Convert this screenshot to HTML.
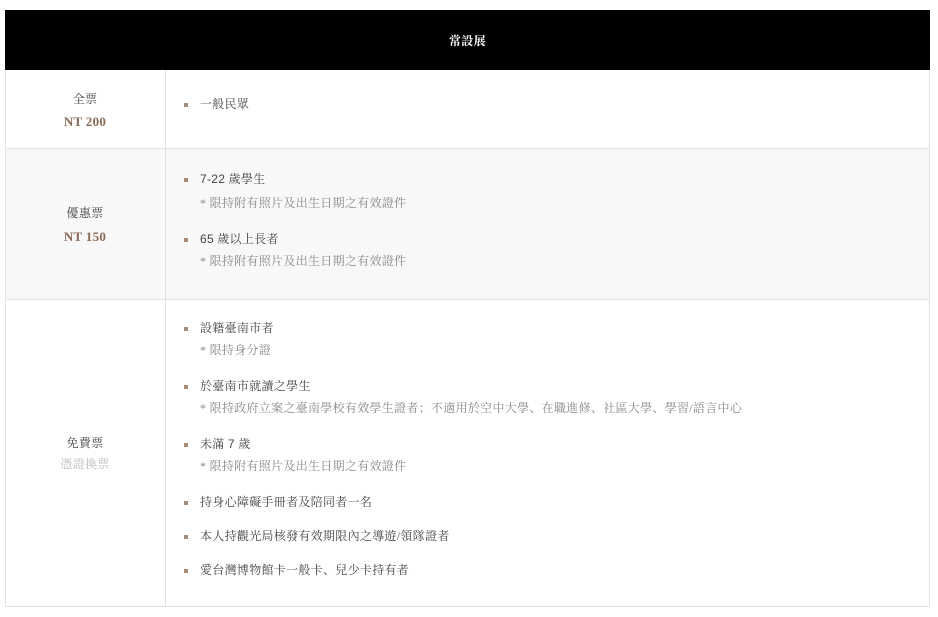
<!DOCTYPE html>
<html><head><meta charset="utf-8"><style>
*{margin:0;padding:0;box-sizing:border-box}
body{width:938px;height:617px;background:#fff;position:relative;font-family:"Liberation Serif","Noto Serif CJK SC",serif;font-size:12px;color:#444;overflow:hidden}
.a{position:absolute;white-space:nowrap;line-height:16px;letter-spacing:0.3px}
.hd{position:absolute;left:5px;top:10px;width:925px;height:60px;background:#000}
.r{position:absolute;left:5px;width:925px;border:1px solid #e3e3e3;border-top:none}
.v{position:absolute;left:165px;width:1px;background:#e3e3e3}
.c{left:5px;width:160px;text-align:center}
.p{color:#8b6a55;font-weight:bold;font-size:13px}
.b{position:absolute;width:4px;height:4px;background:#a78a76}
.s{color:#888}
.n{font-family:"Liberation Sans",sans-serif}
</style></head><body>
<div class="hd"></div>
<div class="a" style="left:449px;top:33px;color:#fff;font-weight:bold">常設展</div>
<div class="r" style="top:70px;height:79px;background:#fff"></div>
<div class="r" style="top:148px;height:152px;background:#f8f8f8;border-top:1px solid #e3e3e3"></div>
<div class="r" style="top:299px;height:308px;background:#fff;border-top:1px solid #e3e3e3"></div>
<div class="v" style="top:70px;height:537px"></div>

<div class="a c" style="top:91px">全票</div>
<div class="a c p" style="top:114px">NT 200</div>
<div class="b" style="left:184px;top:103px"></div><div class="a" style="left:200px;top:96px">一般民眾</div>

<div class="a c" style="top:205px">優惠票</div>
<div class="a c p" style="top:229px">NT 150</div>
<div class="b" style="left:184px;top:178px"></div><div class="a" style="left:200px;top:171px"><span class="n">7-22</span> 歲學生</div>
<div class="a s" style="left:200px;top:195px">* 限持附有照片及出生日期之有效證件</div>
<div class="b" style="left:184px;top:238px"></div><div class="a" style="left:200px;top:231px"><span class="n">65</span> 歲以上長者</div>
<div class="a s" style="left:200px;top:253px">* 限持附有照片及出生日期之有效證件</div>

<div class="a c" style="top:435px">免費票</div>
<div class="a c" style="top:456px;color:#bbb">憑證換票</div>
<div class="b" style="left:184px;top:327px"></div><div class="a" style="left:200px;top:320px">設籍臺南市者</div>
<div class="a s" style="left:200px;top:342px">* 限持身分證</div>
<div class="b" style="left:184px;top:385px"></div><div class="a" style="left:200px;top:378px">於臺南市就讀之學生</div>
<div class="a s" style="left:200px;top:400px">* 限持政府立案之臺南學校有效學生證者；不適用於空中大學、在職進修、社區大學、學習/語言中心</div>
<div class="b" style="left:184px;top:443px"></div><div class="a" style="left:200px;top:436px">未滿 <span class="n">7</span> 歲</div>
<div class="a s" style="left:200px;top:458px">* 限持附有照片及出生日期之有效證件</div>
<div class="b" style="left:184px;top:501px"></div><div class="a" style="left:200px;top:494px">持身心障礙手冊者及陪同者一名</div>
<div class="b" style="left:184px;top:535px"></div><div class="a" style="left:200px;top:528px">本人持觀光局核發有效期限內之導遊/領隊證者</div>
<div class="b" style="left:184px;top:569px"></div><div class="a" style="left:200px;top:562px">愛台灣博物館卡一般卡、兒少卡持有者</div>
</body></html>
